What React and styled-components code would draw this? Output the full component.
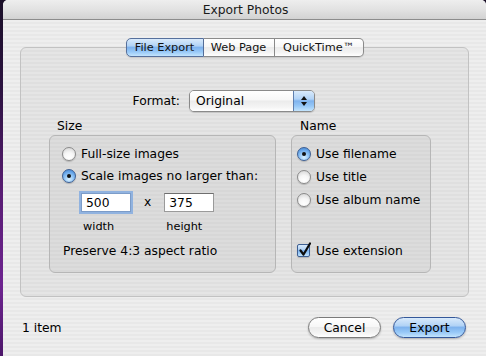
import React from 'react';
import styled, { createGlobalStyle, css } from 'styled-components';

const GlobalStyle = createGlobalStyle`
  html, body { margin: 0; padding: 0; width: 486px; height: 356px; overflow: hidden; }
  body {
    background: linear-gradient(180deg, #1a0f28 0%, #2c1340 25%, #5a1d75 55%, #6e2490 80%, #4d176a 100%);
    font-family: "DejaVu Sans", "Liberation Sans", sans-serif;
  }
`;

const Desktop = styled.div`
  display: flex;
  justify-content: flex-end;
  width: 486px;
  height: 356px;
`;

const Window = styled.div`
  width: 483px;
  height: 356px;
  display: flex;
  flex-direction: column;
  border-radius: 5px 5px 0 0;
  overflow: hidden;
  background: repeating-linear-gradient(180deg, #eeeeee 0 2px, #e8e8e8 2px 4px);
  color: #000;
  font-size: 12.3px;
`;

const TitleBar = styled.div`
  height: 19px;
  flex: none;
  border-bottom: 1px solid #8c8c8c;
  background: linear-gradient(180deg, #eeeeee 0%, #e2e2e2 50%, #d2d2d2 100%);
  display: flex;
  align-items: center;
  justify-content: center;
  color: #1a1a1a;
  padding-left: 2px;
`;

const Body = styled.div`
  display: flex;
  flex-direction: column;
  padding: 27px 17px 0 17px;
`;

const TabPanel = styled.div`
  height: 250px;
  box-sizing: border-box;
  border: 1px solid #c2c2c2;
  border-radius: 6px;
  background: rgba(0, 0, 0, 0.035);
  display: flex;
  flex-direction: column;
`;

const TabRow = styled.div`
  margin-top: -10px;
  display: flex;
  justify-content: center;
  height: 19px;
`;

const blueGloss = css`
  background: linear-gradient(180deg, #d9eafb 0%, #b2d3f6 40%, #7fb3ee 50%, #97c8f7 75%, #c3e4fd 100%);
`;

const whiteGloss = css`
  background: linear-gradient(180deg, #ffffff 0%, #f7f7f7 45%, #ebebeb 50%, #f4f4f4 80%, #ffffff 100%);
`;

const Tab = styled.div`
  width: ${p => p.$w}px;
  height: 19px;
  box-sizing: border-box;
  border: 1px solid #8b8b8b;
  border-left-width: ${p => (p.$first ? 1 : 0)}px;
  border-radius: ${p => (p.$first ? '5px 0 0 5px' : p.$last ? '0 5px 5px 0' : '0')};
  display: flex;
  align-items: center;
  justify-content: center;
  font-size: 11.3px;
  color: #111;
  box-shadow: 0 1px 1px rgba(0, 0, 0, 0.12);
  ${p => (p.$active ? css`${blueGloss} border-color: #56709c;` : whiteGloss)}
`;

const FormatRow = styled.div`
  margin-top: 33px;
  display: flex;
  align-items: center;
  gap: 9px;
  padding-left: 111px;
`;

const FormatLabel = styled.div`
  width: 48px;
  text-align: right;
  white-space: nowrap;
`;

const Popup = styled.div`
  width: 126px;
  height: 22px;
  box-sizing: border-box;
  display: flex;
  border: 1px solid #8a8a8a;
  border-radius: 5px;
  overflow: hidden;
  box-shadow: 0 1px 1px rgba(0, 0, 0, 0.15);
`;

const PopupText = styled.div`
  flex: 1;
  display: flex;
  align-items: center;
  padding-left: 6px;
  ${whiteGloss}
`;

const PopupArrows = styled.div`
  width: 20px;
  border-left: 1px solid #5f7fae;
  display: flex;
  align-items: center;
  justify-content: center;
  ${blueGloss}
`;

const GroupsRow = styled.div`
  margin-top: 7px;
  display: flex;
  gap: 15px;
  padding-left: 28px;
`;

const Group = styled.div`
  display: flex;
  flex-direction: column;
`;

const GroupLabel = styled.div`
  line-height: 15px;
  padding-left: ${p => p.$indent}px;
  margin-bottom: 1px;
`;

const GroupBox = styled.div`
  width: ${p => p.$w}px;
  height: 138px;
  box-sizing: border-box;
  border: 1px solid #b6b6b6;
  border-radius: 6px;
  background: rgba(0, 0, 0, 0.035);
  padding: ${p => p.$pad};
  display: flex;
  flex-direction: column;
`;

const OptionRow = styled.div`
  height: ${p => p.$h || 22}px;
  display: flex;
  align-items: center;
  gap: ${p => p.$gap || 5}px;
  margin-top: ${p => p.$mt || 0}px;
  white-space: nowrap;
`;

const Radio = styled.span`
  position: relative;
  flex: none;
  width: 14px;
  height: 14px;
  box-sizing: border-box;
  border-radius: 50%;
  border: 1px solid ${p => (p.$on ? '#3d5f93' : '#8a8a8a')};
  box-shadow: 0 1px 1px rgba(0, 0, 0, 0.18);
  background: ${p =>
    p.$on
      ? 'radial-gradient(circle at 50% 78%, #d8f0ff 0%, #93c6f6 40%, #5a9be2 75%, #4a86cf 100%)'
      : 'radial-gradient(circle at 50% 80%, #ffffff 0%, #f6f6f6 45%, #dadada 85%, #c8c8c8 100%)'};
  ${p =>
    p.$on &&
    css`
      &::after {
        content: '';
        position: absolute;
        left: 4px;
        top: 4px;
        width: 4px;
        height: 4px;
        border-radius: 50%;
        background: #111;
      }
    `}
`;

const Checkbox = styled.span`
  position: relative;
  flex: none;
  width: 13px;
  height: 13px;
  box-sizing: border-box;
  border-radius: 2px;
  border: 1px solid #3d5f93;
  box-shadow: 0 1px 1px rgba(0, 0, 0, 0.18);
  ${blueGloss}
`;

const CheckMark = styled.svg`
  position: absolute;
  left: 0px;
  top: -3px;
  overflow: visible;
`;

const FieldsRow = styled.div`
  margin-top: 6px;
  display: flex;
  padding-left: 19px;
`;

const FieldCol = styled.div`
  display: flex;
  flex-direction: column;
  gap: 7px;
`;

const Field = styled.div`
  width: 50px;
  height: 19px;
  box-sizing: border-box;
  background: #fff;
  border: 1px solid #9a9a9a;
  border-top-color: #6e6e6e;
  display: flex;
  align-items: center;
  padding-left: 4px;
  ${p =>
    p.$focus &&
    css`
      box-shadow: 0 0 0 2px rgba(120, 165, 225, 0.75);
      border-color: #7c9cc8;
    `}
`;

const SubLabel = styled.div`
  line-height: 15px;
  padding-left: 2px;
  font-size: 11.3px;
`;

const XMark = styled.div`
  line-height: 19px;
  margin: 0 13px;
`;

const Note = styled.div`
  line-height: 15px;
  margin-top: 10px;
  padding-left: 1px;
`;

const BottomRow = styled.div`
  margin-top: 20px;
  height: 21px;
  display: flex;
  align-items: center;
  padding: 0 20px 0 19px;
  gap: 12px;
`;

const ItemCount = styled.div`
  flex: 1;
`;

const Button = styled.div`
  width: 73px;
  height: 21px;
  box-sizing: border-box;
  border-radius: 11px;
  display: flex;
  align-items: center;
  justify-content: center;
  box-shadow: 0 1px 2px rgba(0, 0, 0, 0.25);
  border: 1px solid ${p => (p.$primary ? '#34589a' : '#7a7a7a')};
  ${p => (p.$primary ? blueGloss : whiteGloss)}
`;

const Arrows = () => (
  <svg width="8" height="12" viewBox="0 0 8 12">
    <path d="M4 1 L7 5 L1 5 Z" fill="#111" />
    <path d="M4 11 L7 7 L1 7 Z" fill="#111" />
  </svg>
);

export default function App() {
  return (
    <>
      <GlobalStyle />
      <Desktop>
        <Window>
          <TitleBar>Export Photos</TitleBar>
          <Body>
            <TabPanel>
              <TabRow>
                <Tab $w={78} $first $active>File Export</Tab>
                <Tab $w={71}>Web Page</Tab>
                <Tab $w={89} $last>QuickTime™</Tab>
              </TabRow>
              <FormatRow>
                <FormatLabel>Format:</FormatLabel>
                <Popup>
                  <PopupText>Original</PopupText>
                  <PopupArrows><Arrows /></PopupArrows>
                </Popup>
              </FormatRow>
              <GroupsRow>
                <Group>
                  <GroupLabel $indent={8}>Size</GroupLabel>
                  <GroupBox $w={227} $pad="7px 0 0 12px">
                    <OptionRow>
                      <Radio />
                      <span>Full-size images</span>
                    </OptionRow>
                    <OptionRow>
                      <Radio $on />
                      <span>Scale images no larger than:</span>
                    </OptionRow>
                    <FieldsRow>
                      <FieldCol>
                        <Field $focus>500</Field>
                        <SubLabel>width</SubLabel>
                      </FieldCol>
                      <XMark>x</XMark>
                      <FieldCol>
                        <Field>375</Field>
                        <SubLabel>height</SubLabel>
                      </FieldCol>
                    </FieldsRow>
                    <Note>Preserve 4:3 aspect ratio</Note>
                  </GroupBox>
                </Group>
                <Group>
                  <GroupLabel $indent={9}>Name</GroupLabel>
                  <GroupBox $w={140} $pad="6px 0 0 5px">
                    <OptionRow $h={23}>
                      <Radio $on />
                      <span>Use filename</span>
                    </OptionRow>
                    <OptionRow $h={23}>
                      <Radio />
                      <span>Use title</span>
                    </OptionRow>
                    <OptionRow $h={23}>
                      <Radio />
                      <span>Use album name</span>
                    </OptionRow>
                    <OptionRow $h={23} $mt={28} $gap={6}>
                      <Checkbox>
                        <CheckMark width="14" height="15" viewBox="0 0 14 15">
                          <path d="M2.5 8.5 L5.5 12.5 L12 1.5" fill="none" stroke="#0d0d0d" strokeWidth="2.2" strokeLinecap="round" strokeLinejoin="round" />
                        </CheckMark>
                      </Checkbox>
                      <span>Use extension</span>
                    </OptionRow>
                  </GroupBox>
                </Group>
              </GroupsRow>
            </TabPanel>
          </Body>
          <BottomRow>
            <ItemCount>1 item</ItemCount>
            <Button>Cancel</Button>
            <Button $primary>Export</Button>
          </BottomRow>
        </Window>
      </Desktop>
    </>
  );
}
